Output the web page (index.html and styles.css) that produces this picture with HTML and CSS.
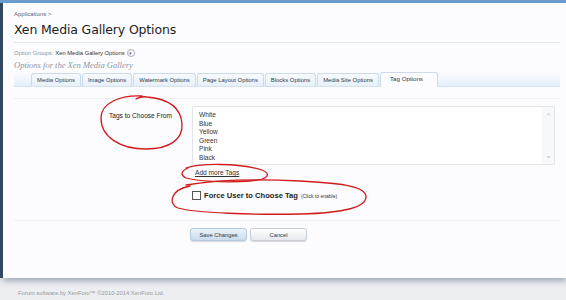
FILE: index.html
```html
<!DOCTYPE html>
<html lang="en">
<head>
    <meta charset="UTF-8">
    <title>Xen Media Gallery Options</title>
    <link rel="stylesheet" href="styles.css">
</head>
<body>
    <div class="topbar"></div>

    <div class="page">
        <div class="sidebar"></div>

        <!-- main content -->
        <div class="panel">
            <div class="breadcrumb"><a href="#">Applications</a> &gt;</div>
            <h1 class="title">Xen Media Gallery Options</h1>

            <div class="group-line">
                <span class="muted">Option Groups:</span>
                <span class="group-name">Xen Media Gallery Options</span>
                <span class="menu-arrow">&#9662;</span>
            </div>
            <div class="subtitle">Options for the Xen Media Gallery</div>

            <ul class="tabs">
                <li>Media Options</li>
                <li>Image Options</li>
                <li>Watermark Options</li>
                <li>Page Layout Options</li>
                <li>Blocks Options</li>
                <li>Media Site Options</li>
                <li class="active">Tag Options</li>
            </ul>

            <div class="form">
                <div class="row">
                    <div class="label">Tags to Choose From</div>
                    <div class="control">
                        <div class="textarea">
                            <div class="lines">
                                White<br>Blue<br>Yellow<br>Green<br>Pink<br>Black
                            </div>
                            <div class="scroll">
                                <span>&#8963;</span>
                                <span>&#8964;</span>
                            </div>
                        </div>
                        <a class="add-more" href="#">Add more Tags</a>
                    </div>
                </div>

                <div class="row">
                    <div class="label"></div>
                    <label class="check">
                        <span class="box"></span>
                        <b>Force User to Choose Tag</b>
                        <span class="hint">(Click to enable)</span>
                    </label>
                </div>

                <div class="buttons">
                    <button class="btn primary">Save Changes</button>
                    <button class="btn">Cancel</button>
                </div>
            </div>

            <!-- red marker circles drawn over the screenshot -->
            <svg class="marks" width="566" height="300" viewBox="0 0 566 300">
                <g fill="none" stroke="#d11a1a" stroke-width="1.3" stroke-linecap="round">
                    <path d="M142 96 C120 95 101 103 101 118 C101 137 120 149 146 149 C170 149 183 139 182 124 C181 110 171 99 147 97 C141 96 138 98 136 99"/>
                    <path d="M186 168 C200 163 240 163 262 170 C272 174 268 180 250 181 C225 183 196 181 186 178 C180 175 181 171 188 168"/>
                    <path d="M186 185 C215 180 260 179 300 181 C335 183 364 185 366 196 C367 207 345 213 300 214 C255 215 195 213 178 208 C168 204 170 190 190 186"/>
                </g>
            </svg>
        </div>
    </div>

    <div class="footer">Forum software by XenForo&trade; &copy;2010-2014 XenForo Ltd.</div>
</body>
</html>
```

FILE: styles.css
```css
:root {
    --blue-bar: #6c9ed3;
    --side-color: #34485e;
    --line-color: #e3e9f0;
    --text-color: #222;
    --muted: #8a96a3;
}

body {
    margin: 0;
    background-color: #eceef1;
    font-family: "Liberation Sans", Tahoma, sans-serif;
    color: var(--text-color);
    overflow: hidden;
}

.topbar {
    height: 3px;
    background-color: var(--blue-bar);
}

.page {
    display: flex;
    height: 275px;
}

.sidebar {
    width: 3px;
    background-color: var(--side-color);
}

.panel {
    flex: 1;
    padding: 8px 6px 0 11px;
    background-color: #fcfcfe;
    box-shadow: 0 3px 6px rgba(60, 80, 110, 0.45);
}

.breadcrumb {
    font-size: 6px;
    color: #4d6a8e;
    height: 8px;
}

.breadcrumb a {
    color: #4d6a8e;
    text-decoration: none;
}

.title {
    margin: 0;
    padding: 3px 0 5px;
    font-family: "DejaVu Sans", sans-serif;
    font-weight: normal;
    font-size: 12.5px;
    letter-spacing: -0.15px;
    color: #1c1c1c;
    border-bottom: 1px solid var(--line-color);
}

.group-line {
    margin-top: 5px;
    font-size: 5.8px;
    display: flex;
    align-items: center;
    gap: 2px;
    height: 9px;
}

.muted {
    color: var(--muted);
}

.group-name {
    color: #333;
}

.menu-arrow {
    display: inline-block;
    width: 6px;
    height: 6px;
    line-height: 6px;
    border: 1px solid #aab;
    border-radius: 50%;
    text-align: center;
    font-size: 5px;
    color: #667;
}

/* subtitle */
.subtitle {
    margin-top: 3px;
    font-family: "Liberation Serif", serif;
    font-style: italic;
    font-size: 8.5px;
    color: #8d959e;
    height: 10px;
}

/* tabs */
.tabs {
    list-style: none;
    margin: 2px 0 0;
    padding: 0 0 0 17px;
    display: flex;
    align-items: flex-end;
    gap: 1px;
    height: 14px;
    border-bottom: 1px solid #d4e2ef;
    background: linear-gradient(to bottom, rgba(220, 235, 247, 0) 0, #e4eff8 100%);
}

.tabs li {
    height: 12px;
    line-height: 12px;
    padding: 0 5px;
    font-size: 5.9px;
    color: #2f3b4a;
    background: linear-gradient(to bottom, #f7fafd, #e6eff8);
    border: 1px solid #cbdbea;
    border-bottom: none;
    border-radius: 3px 3px 0 0;
    white-space: nowrap;
}

.tabs li.active {
    height: 14px;
    line-height: 12px;
    padding: 0 14px 0 9px;
    margin-bottom: -1px;
    background: #fcfcfe;
    font-size: 6.2px;
}

/* form */
.form {
    margin-top: 11px;
    border-top: 1px solid #edf0f4;
    padding-top: 7px;
}

.row {
    display: flex;
    gap: 20px;
}

.label {
    width: 158px;
    text-align: right;
    font-size: 6.6px;
    padding-top: 6px;
}

.control {
    flex: 1;
    padding-right: 5px;
}

.textarea {
    display: flex;
    height: 57px;
    border: 1px solid #e2e4e8;
    border-radius: 2px;
    background-color: #fff;
}

.lines {
    flex: 1;
    padding: 4px 6px;
    font-size: 6.6px;
    line-height: 8.6px;
    color: #333;
}

.scroll {
    width: 12px;
    display: flex;
    flex-direction: column;
    justify-content: space-between;
    align-items: center;
    padding: 5px 0 4px;
    background-color: #f7f8fa;
    color: #b4b8be;
    font-size: 8px;
}

.add-more {
    display: block;
    width: max-content;
    margin: 4px 0 0 3px;
    font-size: 6.6px;
    line-height: 8px;
    color: #333;
}

.check {
    display: flex;
    align-items: center;
    gap: 3px;
    margin-top: 14px;
    font-size: 7.6px;
}

.box {
    width: 7px;
    height: 7px;
    border: 1px solid #555;
    background-color: #fff;
}

.hint {
    font-size: 5px;
    color: #333;
}

.buttons {
    margin-top: 20px;
    border-top: 1px solid #edf0f4;
    padding: 7px 0 0 176px;
    display: flex;
    gap: 3px;
}

.btn {
    width: 57px;
    height: 13px;
    padding: 0;
    font-family: inherit;
    font-size: 5.8px;
    color: #333;
    border: 1px solid #c8ccd4;
    border-radius: 3px;
    background: linear-gradient(to bottom, #ffffff, #e6e8ee);
    box-shadow: 0 1px 1px rgba(0, 0, 0, 0.15);
}

.btn.primary {
    background: linear-gradient(to bottom, #eaf2fa, #c8dcee);
    border-color: #b3c9de;
}

.marks {
    position: absolute;
    left: 0;
    top: 0;
    pointer-events: none;
}

.footer {
    padding: 12px 0 0 18px;
    font-size: 5.8px;
    color: #999;
}
```
